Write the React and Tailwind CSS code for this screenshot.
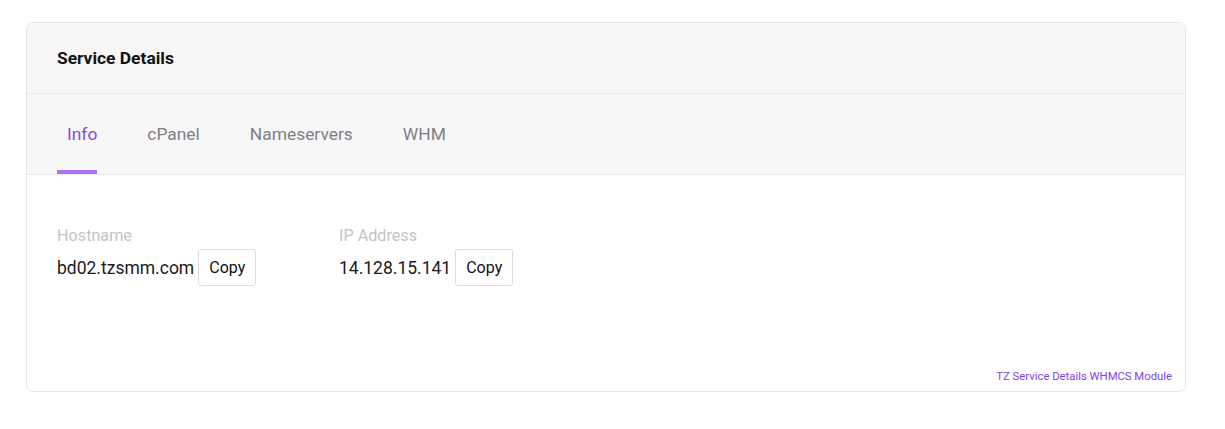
export default function App() {
  const tabs = ["Info", "cPanel", "Nameservers", "WHM"];
  return (
    <div className="bg-white w-[1225px] h-[429px] pt-[22px] px-[26px]" style={{ fontFamily: "Roboto, 'Liberation Sans', sans-serif" }}>
      <div className="w-[1160px] h-[370px] border border-[#e6e6e6] rounded-[7px] flex flex-col overflow-hidden">
        <div className="h-[71px] bg-[#f7f7f7] border-b border-[#e8e8e8] flex items-center pl-[30px] pt-[2px]">
          <h2 className="text-[17.4px] font-bold text-[#111] leading-none">Service Details</h2>
        </div>
        <div className="h-[81px] bg-[#f7f7f7] border-b border-[#e8e8e8] flex items-end pl-[30px]">
          {tabs.map((t, i) => (
            <div key={t} className="flex flex-col mr-[40px]">
              <span className={"pl-[10px] text-[17.4px] leading-none pb-[27px] " + (i === 0 ? "text-[#8a48e0]" : "text-[#7f7f87]")}>{t}</span>
              <div className={"h-[4px] " + (i === 0 ? "bg-[#a874f4]" : "bg-transparent")}></div>
            </div>
          ))}
        </div>
        <div className="flex-1 flex flex-col">
          <div className="flex pl-[30px] pt-[53px]">
            <div className="w-[282px] flex flex-col">
              <span className="text-[16.2px] text-[#c4c4c4] leading-none">Hostname</span>
              <div className="flex items-center mt-[5px]">
                <span className="text-[17.5px] text-[#1a1a1a]">bd02.tzsmm.com</span>
                <button className="ml-[4px] h-[37px] px-[10px] border border-[#dedede] rounded-[3px] bg-white text-[16px] text-[#111]">Copy</button>
              </div>
            </div>
            <div className="flex flex-col">
              <span className="text-[16.2px] text-[#c4c4c4] leading-none">IP Address</span>
              <div className="flex items-center mt-[5px]">
                <span className="text-[17.5px] text-[#1a1a1a]">14.128.15.141</span>
                <button className="ml-[4px] h-[37px] px-[10px] border border-[#dedede] rounded-[3px] bg-white text-[16px] text-[#111]">Copy</button>
              </div>
            </div>
          </div>
          <div className="mt-auto flex justify-end pr-[13px] pb-[5px]">
            <span className="text-[11.3px] text-[#7e45dd]">TZ Service Details WHMCS Module</span>
          </div>
        </div>
      </div>
    </div>
  );
}
